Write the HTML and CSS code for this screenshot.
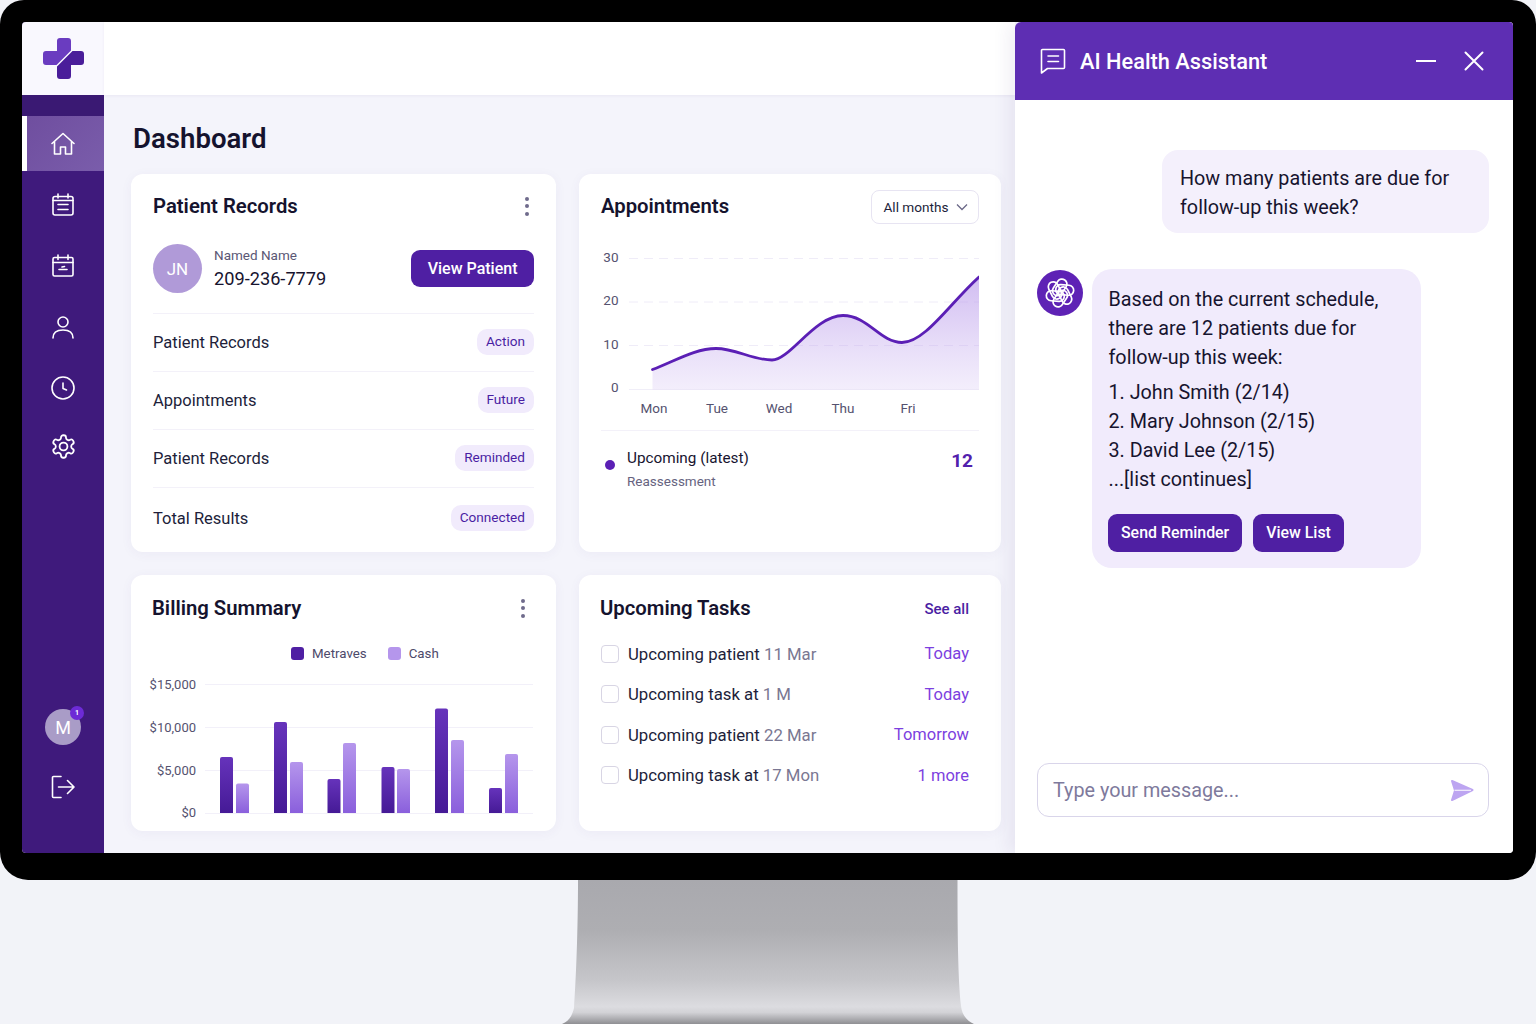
FILE: index.html
```html
<!DOCTYPE html>
<html lang="en">
<head>
<meta charset="utf-8">
<title>AI Health Assistant Dashboard</title>
<link rel="stylesheet" href="styles.css">
</head>
<body>
<div class="monitor">
  <div class="screen">
    <aside class="sidebar">
      <div class="logo">
        <svg class="logo-mark" width="42" height="41" viewBox="0 0 42 41"><path fill="#6a3cc0" d="M14 3a3 3 0 0 1 3-3h8a3 3 0 0 1 3 3v9.500L13.500 27H3a3 3 0 0 1-3-3v-8a3 3 0 0 1 3-3h11z"/><path fill="#4a1d9a" d="M29.500 13H38a3 3 0 0 1 3 3v8a3 3 0 0 1-3 3H28v11a3 3 0 0 1-3 3h-8a3 3 0 0 1-3-3v-9.500z"/></svg>
      </div>
      <nav class="nav">
        <a class="nav-item active"><svg class="ico" viewBox="0 0 24 24"><path d="M1 11.500 12 1.500l11 10M3.500 9.500V22h6v-7h5v7h6V9.500"/></svg></a>
        <a class="nav-item"><svg class="ico" viewBox="0 0 24 24"><rect x="2" y="3.500" width="20" height="18.500" rx="2"/><path d="M7 1v4M17 1v4M2 7.500h20M7 11.500h10M7 16.500h10"/></svg></a>
        <a class="nav-item"><svg class="ico" viewBox="0 0 24 24"><rect x="2" y="3.500" width="20" height="18.500" rx="1.500"/><path d="M7 1v4.500M17 1v4.500M2 8.500h20M8 15.500h8M11 13l2.500-.5"/></svg></a>
        <a class="nav-item"><svg class="ico" viewBox="0 0 24 24"><circle cx="12" cy="7" r="5"/><path d="M2 23c0-5.500 4-8 10-8s10 2.500 10 8"/></svg></a>
        <a class="nav-item"><svg class="ico" viewBox="0 0 24 24"><circle cx="12" cy="12" r="11"/><path d="M12 7v5.500l3.500 1.500"/></svg></a>
        <a class="nav-item gear"><svg class="ico" viewBox="0 0 24 24"><path d="M12.220 2h-.44a2 2 0 0 0-2 2v.18a2 2 0 0 1-1 1.730l-.43.250a2 2 0 0 1-2 0l-.15-.080a2 2 0 0 0-2.730.730l-.22.380a2 2 0 0 0 .730 2.730l.150.100a2 2 0 0 1 1 1.720v.510a2 2 0 0 1-1 1.740l-.150.090a2 2 0 0 0-.730 2.730l.22.380a2 2 0 0 0 2.730.730l.150-.080a2 2 0 0 1 2 0l.430.250a2 2 0 0 1 1 1.730V20a2 2 0 0 0 2 2h.44a2 2 0 0 0 2-2v-.18a2 2 0 0 1 1-1.730l.430-.250a2 2 0 0 1 2 0l.150.080a2 2 0 0 0 2.730-.730l.22-.390a2 2 0 0 0-.730-2.730l-.150-.080a2 2 0 0 1-1-1.740v-.500a2 2 0 0 1 1-1.740l.150-.090a2 2 0 0 0 .730-2.730l-.22-.380a2 2 0 0 0-2.730-.730l-.150.080a2 2 0 0 1-2 0l-.430-.250a2 2 0 0 1-1-1.730V4a2 2 0 0 0-2-2z"/><circle cx="12" cy="12" r="3.500"/></svg></a>
      </nav>
      <div class="side-foot">
        <div class="user-avatar">M<span class="user-badge">1</span></div>
        <svg class="ico" viewBox="0 0 24 24"><path d="M10 1.500H2.500a1 1 0 0 0-1 1v19a1 1 0 0 0 1 1H10M7.500 12h15M16.500 5.500l6.500 6.500-6.500 6.500"/></svg>
      </div>
    </aside>

    <div class="main">
      <header class="topbar"></header>
      <div class="page">
        <h1 class="page-title">Dashboard</h1>
        <div class="grid">
          <section class="card records">
            <div class="card-head">
              <h2>Patient Records</h2>
              <span class="kebab"><i></i><i></i><i></i></span>
            </div>
            <div class="patient">
              <div class="patient-avatar">JN</div>
              <div class="patient-info">
                <div class="patient-name">Named Name</div>
                <div class="patient-phone">209-236-7779</div>
              </div>
              <button class="btn">View Patient</button>
            </div>
            <div class="rec-row"><span>Patient Records</span><span class="tag">Action</span></div>
            <div class="rec-row"><span>Appointments</span><span class="tag">Future</span></div>
            <div class="rec-row"><span>Patient Records</span><span class="tag">Reminded</span></div>
            <div class="rec-row last"><span>Total Results</span><span class="tag">Connected</span></div>
          </section>

          <section class="card appts">
            <div class="card-head">
              <h2>Appointments</h2>
              <div class="select">All months
                <svg width="12" height="8" viewBox="0 0 12 8"><path d="M1 1.500 6 6.500l5-5" fill="none" stroke="#6b6888" stroke-width="1.300"/></svg>
              </div>
            </div>
            <svg class="line-chart" width="378" height="175" viewBox="601 245 378 175">
              <defs>
                <linearGradient id="area" x1="0" y1="0" x2="0" y2="1">
                  <stop offset="0" stop-color="#b898ea" stop-opacity=".65"/>
                  <stop offset="1" stop-color="#c9b2f0" stop-opacity=".22"/>
                </linearGradient>
              </defs>
              <g class="grid-dash">
                <path d="M629 258.500H979M629 302H979M629 345.500H979"/>
              </g>
              <path d="M629 389.500H979" stroke="#f0eef8" stroke-width="1"/>
              <path fill="url(#area)" d="M652.500 369.500C675 361 695 348.500 716 348.500C736 348.500 752 360 772 360C790 360 815 315.500 843 315.500C868 315.500 880 342.500 902 342.500C925 342.500 950 303 979 277V389.500H652.500Z"/>
              <path fill="none" stroke="#5b1fb5" stroke-width="2.800" stroke-linecap="round" d="M652.500 369.500C675 361 695 348.500 716 348.500C736 348.500 752 360 772 360C790 360 815 315.500 843 315.500C868 315.500 880 342.500 902 342.500C925 342.500 950 303 979 277"/>
              <g class="axis end-text">
                <text x="618.500" y="262">30</text><text x="618.500" y="305">20</text><text x="618.500" y="349">10</text><text x="618.500" y="392">0</text>
              </g>
              <g class="axis mid-text">
                <text x="654" y="412.500">Mon</text><text x="717" y="412.500">Tue</text><text x="779" y="412.500">Wed</text><text x="843" y="412.500">Thu</text><text x="908" y="412.500">Fri</text>
              </g>
            </svg>
            <div class="upcoming">
              <span class="dot"></span>
              <div class="up-text">
                <div class="up-title">Upcoming (latest)</div>
                <div class="up-sub">Reassessment</div>
              </div>
              <div class="up-num">12</div>
            </div>
          </section>

          <section class="card billing">
            <div class="card-head">
              <h2>Billing Summary</h2>
              <span class="kebab"><i></i><i></i><i></i></span>
            </div>
            <div class="legend">
              <span class="legend-item"><i class="swatch dark"></i>Metraves</span>
              <span class="legend-item"><i class="swatch light"></i>Cash</span>
            </div>
            <svg class="bar-chart" width="382" height="160" viewBox="152 665 382 160">
              <defs>
                <linearGradient id="barD" x1="0" y1="0" x2="0" y2="1"><stop offset="0" stop-color="#6633bb"/><stop offset="1" stop-color="#451a96"/></linearGradient>
                <linearGradient id="barL" x1="0" y1="0" x2="0" y2="1"><stop offset="0" stop-color="#b596ec"/><stop offset="1" stop-color="#8a5fdc"/></linearGradient>
              </defs>
              <path d="M205 684.500H533M205 727.500H533M205 770.500H533M205 813.500H533" stroke="#f2f0f9" stroke-width="1"/>
              <g fill="url(#barD)">
                <path d="M220 813V759a2 2 0 0 1 2-2h9a2 2 0 0 1 2 2v54z"/>
                <path d="M274 813V724a2 2 0 0 1 2-2h9a2 2 0 0 1 2 2v89z"/>
                <path d="M327.500 813V781a2 2 0 0 1 2-2h9a2 2 0 0 1 2 2v32z"/>
                <path d="M381.500 813V769a2 2 0 0 1 2-2h9a2 2 0 0 1 2 2v44z"/>
                <path d="M435 813V710.500a2 2 0 0 1 2-2h9a2 2 0 0 1 2 2V813z"/>
                <path d="M489 813V790a2 2 0 0 1 2-2h9a2 2 0 0 1 2 2v23z"/>
              </g>
              <g fill="url(#barL)">
                <path d="M236 813V785.500a2 2 0 0 1 2-2h9a2 2 0 0 1 2 2V813z"/>
                <path d="M290 813V764a2 2 0 0 1 2-2h9a2 2 0 0 1 2 2v49z"/>
                <path d="M343 813V745a2 2 0 0 1 2-2h9a2 2 0 0 1 2 2v68z"/>
                <path d="M397 813V771a2 2 0 0 1 2-2h9a2 2 0 0 1 2 2v42z"/>
                <path d="M451 813V742a2 2 0 0 1 2-2h9a2 2 0 0 1 2 2v71z"/>
                <path d="M505 813V756a2 2 0 0 1 2-2h9a2 2 0 0 1 2 2v57z"/>
              </g>
              <g class="axis end-text bar-axis">
                <text x="196" y="688.500">$15,000</text><text x="196" y="731.500">$10,000</text><text x="196" y="774.500">$5,000</text><text x="196" y="817">$0</text>
              </g>
            </svg>
          </section>

          <section class="card tasks">
            <div class="card-head tasks-head">
              <h2>Upcoming Tasks</h2>
              <a class="see-all">See all</a>
            </div>
            <ul class="task-list">
              <li class="task"><span class="check"></span><span class="task-text">Upcoming patient <em>11 Mar</em></span><span class="task-when">Today</span></li>
              <li class="task"><span class="check"></span><span class="task-text">Upcoming task at <em>1 M</em></span><span class="task-when">Today</span></li>
              <li class="task"><span class="check"></span><span class="task-text">Upcoming patient <em>22 Mar</em></span><span class="task-when">Tomorrow</span></li>
              <li class="task"><span class="check"></span><span class="task-text">Upcoming task at <em>17 Mon</em></span><span class="task-when">1 more</span></li>
            </ul>
          </section>
        </div>
      </div>
    </div>

    <aside class="panel">
      <header class="panel-head">
        <svg class="chat-ico" viewBox="0 0 26 26"><path d="M2.500 1.500h21a1 1 0 0 1 1 1v17a1 1 0 0 1-1 1H7.500l-6 4.500v-22.500a1 1 0 0 1 1-1zM8 8h10.500M8 13.500h10.500"/></svg>
        <div class="panel-title">AI Health Assistant</div>
        <svg class="win-ico minimize" viewBox="0 0 20 20"><path d="M0 10h20"/></svg>
        <svg class="win-ico" viewBox="0 0 20 20"><path d="M1.500 1.500l17 17M18.500 1.500l-17 17"/></svg>
      </header>
      <div class="panel-body">
        <div class="msg-user">How many patients are due for follow-up this week?</div>
        <div class="msg-ai">
          <div class="ai-avatar">
            <svg width="36" height="36" viewBox="0 0 36 36" class="swirl">
              <rect x="13" y="3.500" width="10" height="18" rx="5" transform="rotate(0 18 18) rotate(34 18 12)"/>
              <rect x="13" y="3.500" width="10" height="18" rx="5" transform="rotate(60 18 18) rotate(34 18 12)"/>
              <rect x="13" y="3.500" width="10" height="18" rx="5" transform="rotate(120 18 18) rotate(34 18 12)"/>
              <rect x="13" y="3.500" width="10" height="18" rx="5" transform="rotate(180 18 18) rotate(34 18 12)"/>
              <rect x="13" y="3.500" width="10" height="18" rx="5" transform="rotate(240 18 18) rotate(34 18 12)"/>
              <rect x="13" y="3.500" width="10" height="18" rx="5" transform="rotate(300 18 18) rotate(34 18 12)"/>
            </svg>
          </div>
          <div class="ai-bubble">
            <p>Based on the current schedule, there are 12 patients due for follow-up this week:</p>
            <ol>
              <li>1. John Smith (2/14)</li>
              <li>2. Mary Johnson (2/15)</li>
              <li>3. David Lee (2/15)</li>
              <li>...[list continues]</li>
            </ol>
            <div class="ai-actions">
              <button class="btn chat-btn">Send Reminder</button>
              <button class="btn chat-btn">View List</button>
            </div>
          </div>
        </div>
        <div class="composer">
          <span class="placeholder">Type your message...</span>
          <svg width="24" height="23" viewBox="0 0 24 23"><path fill="#bda5f1" stroke="#bda5f1" stroke-width="2" stroke-linejoin="round" d="M2 2 22.500 11 2 21 5 11.500z"/><path d="M4.500 11.200H21" stroke="#fff" stroke-width="1.100"/></svg>
        </div>
      </div>
    </aside>
  </div>
</div>
<div class="stand-wrap"><div class="stand"></div></div>
</body>
</html>
```
FILE: styles.css
```css
* { box-sizing: border-box; }
html, body { margin: 0; height: 1024px; overflow: hidden; }
body { background: #f2f3f8; font-family: Roboto, "Noto Sans", sans-serif; color: #17142f; }

.monitor { height: 880px; background: #000; border-radius: 24px 24px 28px 28px; padding: 22px 23px 27px 22px; }
.screen { display: flex; height: 831px; border-radius: 4px; overflow: hidden; background: #f4f4fb; }

.sidebar { width: 82px; background: #3f1a7c; display: flex; flex-direction: column; flex: none; }
.logo { height: 73px; background: #f9f8fe; display: flex; align-items: center; justify-content: center; }
.logo-mark { margin-left: 2px; }
.nav { display: flex; flex-direction: column; gap: 6px; padding-top: 21px; background: linear-gradient(#3a1973 0, #3a1973 21px, transparent 21px); }
.nav-item { height: 55px; display: flex; align-items: center; justify-content: center; }
.nav-item.active { border-left: 5px solid #fff; padding-right: 5px; background: linear-gradient(135deg, #6f4e9f, #7a5dab); }
.nav-item.gear { margin-top: -2.500px; }
.nav-item.gear .ico { width: 27px; height: 27px; }
.ico { width: 24px; height: 24px; fill: none; stroke: #fff; stroke-width: 1.600; stroke-linecap: round; stroke-linejoin: round; }
.side-foot { margin-top: auto; display: flex; flex-direction: column; align-items: center; gap: 30px; padding-bottom: 54px; }
.user-avatar { position: relative; width: 36px; height: 36px; border-radius: 50%; background: #a99cc7; color: #fff; font-size: 18px; display: flex; align-items: center; justify-content: center; }
.user-badge { position: absolute; top: -3px; right: -3px; width: 14px; height: 14px; border-radius: 50%; background: #6d2bd6; font-size: 7px; font-weight: 700; display: flex; align-items: center; justify-content: center; }

.main { width: 911px; flex: none; display: flex; flex-direction: column; }
.topbar { height: 73px; background: #fff; box-shadow: 0 1px 3px rgba(60, 40, 120, .06); flex: none; }
.page { padding: 0 14px 0 27px; }
.page-title { margin: 0; height: 79px; padding: 26px 0 0 2px; font-size: 27.600px; line-height: 36px; font-weight: 600; color: #15132e; }
.grid { display: grid; grid-template-columns: 425px 422px; grid-template-rows: 378px 256px; gap: 23px; }
.card { background: #fff; border-radius: 12px; box-shadow: 0 2px 12px rgba(70, 50, 140, .05); padding: 0 22px; }

.card-head { height: 64px; display: flex; align-items: center; justify-content: space-between; }
.card-head h2 { margin: 0; font-size: 20.300px; font-weight: 600; color: #15132e; }
.kebab { display: flex; flex-direction: column; gap: 3.500px; padding-right: 5px; }
.kebab i { width: 4px; height: 4px; border-radius: 50%; background: #6f6b8c; }

.patient { display: flex; align-items: center; padding: 6px 0 20px; border-bottom: 1px solid #f3f1f9; }
.patient-avatar { width: 49px; height: 49px; border-radius: 50%; background: #b09ad8; color: #fff; font-size: 17px; display: flex; align-items: center; justify-content: center; flex: none; }
.patient-info { margin-left: 12px; flex: 1; }
.patient-name { font-size: 13.500px; color: #5a5775; line-height: 18px; }
.patient-phone { font-size: 18.200px; line-height: 26px; margin-top: 2px; color: #17142f; }
.btn { border: 0; background: #4f1fa3; color: #fff; font-family: inherit; font-size: 16px; font-weight: 500; border-radius: 9px; height: 37px; padding: 0 16.500px; }
.rec-row { height: 58px; display: flex; align-items: center; justify-content: space-between; border-bottom: 1px solid #f3f1f9; font-size: 16.500px; color: #211e3a; }
.rec-row.last { height: 60px; border-bottom: 0; }
.tag { background: #f1ebfc; color: #4a1ea3; font-size: 13.600px; height: 26px; line-height: 25px; padding: 0 9px; border-radius: 10px; margin-top: -1px; }

.select { width: 108px; height: 34px; margin-top: 1px; padding-left: 2px; border: 1px solid #e7e4f2; border-radius: 8px; display: flex; align-items: center; justify-content: center; gap: 8px; font-size: 13.600px; color: #211e3a; }
.line-chart { display: block; margin-top: 7px; }
.grid-dash path { stroke: #efecf8; stroke-width: 1; stroke-dasharray: 9 6; fill: none; }
.axis text { font-family: Roboto, sans-serif; font-size: 13.500px; fill: #55526f; }
.bar-axis text { font-size: 13px; }
.end-text text { text-anchor: end; }
.mid-text text { text-anchor: middle; }
.upcoming { margin-top: 10px; border-top: 1px solid #f3f1f9; display: flex; align-items: flex-start; padding-top: 15px; }
.dot { width: 10px; height: 10px; border-radius: 50%; background: #5b1fb5; margin: 14px 0 0 4px; flex: none; }
.up-text { margin-left: 12px; flex: 1; }
.up-title { font-size: 15.300px; font-weight: 450; line-height: 24px; color: #17142f; }
.up-sub { font-size: 13.500px; line-height: 22px; color: #66637f; }
.up-num { font-size: 19px; font-weight: 700; color: #5220ad; margin: 3px 6px 0 0; }

.billing { padding: 0 21px; }
.billing .card-head { height: 66px; }
.billing .kebab { padding-right: 10px; }
.legend { height: 24px; display: flex; align-items: center; gap: 21px; padding-left: 139px; font-size: 13.300px; color: #4d4a6a; }
.legend-item { display: flex; align-items: center; gap: 8px; }
.swatch { width: 13px; height: 13px; border-radius: 3px; }
.swatch.dark { background: #4f1fa3; }
.swatch.light { background: #b596ec; }
.bar-chart { display: block; overflow: visible; }

.tasks { padding: 0 32px 0 22px; }
.tasks-head { height: 58.400px; align-items: flex-start; padding-top: 20px; }
.tasks-head h2 { line-height: 26px; margin-left: -1px; }
.see-all { font-size: 15px; font-weight: 500; color: #4a1ea3; line-height: 28px; }
.task-list { list-style: none; margin: 0; padding: 0; }
.task { height: 40.600px; display: flex; align-items: center; font-size: 16.500px; }
.check { width: 18px; height: 18px; border: 1.500px solid #d8d5e4; border-radius: 4px; margin-right: 9px; flex: none; }
.task-text { flex: 1; color: #211e3a; font-size: 16.750px; }
.task-text em { font-style: normal; color: #7a7792; }
.task-when { color: #7c3fe0; }

.panel { flex: 1; background: #fff; box-shadow: -6px 0 18px rgba(60, 40, 120, .08); display: flex; flex-direction: column; border-radius: 6px 0 0 0; position: relative; }
.panel-head { height: 78px; background: #5e2eb3; color: #fff; display: flex; align-items: center; padding: 0 29px 0 25px; flex: none; border-radius: 6px 0 0 0; }
.chat-ico { width: 26px; height: 26px; fill: none; stroke: #fff; stroke-width: 1.600; stroke-linejoin: round; stroke-linecap: round; }
.panel-title { margin-left: 14px; flex: 1; font-size: 21.800px; font-weight: 500; }
.win-ico { width: 20px; height: 20px; fill: none; stroke: #fff; stroke-width: 2; stroke-linecap: round; margin-left: 28px; }
.win-ico.minimize { margin: 0; }

.panel-body { flex: 1; display: flex; flex-direction: column; padding: 50px 24px 36px 22px; font-size: 19.750px; line-height: 29px; color: #17142f; }
.msg-user { align-self: flex-end; width: 327px; background: #f4f0fc; border-radius: 16px; padding: 14px 18px 11px; }
.msg-ai { display: flex; align-items: flex-start; gap: 9px; margin-top: 36px; }
.ai-avatar { width: 46px; height: 46px; border-radius: 50%; background: #5e22b5; display: flex; align-items: center; justify-content: center; margin-top: 1px; flex: none; }
.swirl { fill: none; stroke: #fff; stroke-width: 1.700; }
.ai-bubble { width: 329px; background: #f1ebfc; border-radius: 20px; padding: 16px 16px 16.500px 16.500px; }
.ai-bubble p { margin: 0 0 6px; }
.ai-bubble ol { list-style: none; margin: 0; padding: 0; }
.ai-actions { display: flex; gap: 11px; margin: 20px 0 0 -.5px; }
.chat-btn { height: 37.500px; padding: 0 13px; font-size: 15.900px; }
.composer { margin-top: auto; height: 54px; border: 1px solid #d9d5ea; border-radius: 12px; display: flex; align-items: center; justify-content: space-between; padding: 0 14px 0 15px; }
.placeholder { color: #7e7a9c; font-size: 19.800px; }

.stand-wrap { display: flex; justify-content: center; }
.stand { width: 412px; height: 144px; background: linear-gradient(#a9a9ae 0, #aeaeb2 35%, #c6c6ca 70%, #dcdce0 88%, #d2d2d6 92%, #8f8f93 100%); clip-path: path('M16 0H395.500C395.500 50 396 100 399 126C400 135 405 141 412 144H0C7 141 10 136 12 128C14 100 16 50 16 0Z'); }
```
